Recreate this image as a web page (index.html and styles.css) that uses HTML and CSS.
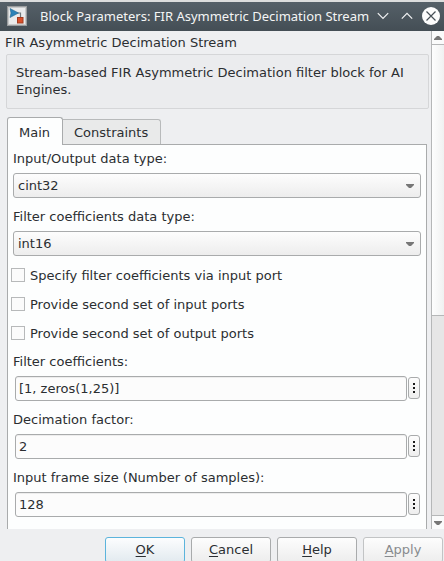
FILE: index.html
```html
<!DOCTYPE html>
<html lang="en">
<head>
<meta charset="utf-8">
<title>Block Parameters: FIR Asymmetric Decimation Stream</title>
<link rel="stylesheet" href="styles.css">
</head>
<body>
<div class="window">
  <header class="titlebar">
    <svg class="app-icon" width="20" height="20" viewBox="0 0 20 20">
      <rect x=".5" y=".5" width="19" height="19" fill="#e9eaeb" stroke="#999c9e"/>
      <rect x="1.5" y="1.5" width="17" height="17" fill="none" stroke="#c8c9ca"/>
      <path d="M10 7H13.5V12" fill="none" stroke="#70787d" stroke-width="1.2"/>
      <path d="M3 2.5L11.5 7L3 11.5L4 7Z" fill="#2d83b8" stroke="#22658f" stroke-width=".6"/>
      <rect x="10.5" y="11.5" width="5.5" height="5.5" fill="#d9502b" stroke="#a13c20"/>
    </svg>
    <h1 class="title">Block Parameters: FIR Asymmetric Decimation Stream</h1>
    <div class="controls">
      <svg width="12" height="8" viewBox="0 0 12 8"><path d="M.8 1.2L6 6.4L11.2 1.2" fill="none" stroke="#f3f4f5" stroke-width="1.2"/></svg>
      <svg width="12" height="8" viewBox="0 0 12 8"><path d="M.8 6.6L6 1.4L11.2 6.6" fill="none" stroke="#f3f4f5" stroke-width="1.2"/></svg>
      <svg class="close" width="18" height="18" viewBox="0 0 18 18"><circle cx="9" cy="9" r="9" fill="#fcfcfc"/><path d="M4.5 4.5L13.5 13.5M13.5 4.5L4.5 13.5" stroke="#475057" stroke-width="1.2"/></svg>
    </div>
  </header>
  <div class="viewport">
    <main class="content">
      <div class="heading">FIR Asymmetric Decimation Stream</div>
      <div class="description">Stream-based FIR Asymmetric Decimation filter block for AI<br>Engines.</div>
      <nav class="tabs"><div class="tab active">Main</div><div class="tab">Constraints</div></nav>
      <section class="panel">
        <div class="label">Input/Output data type:</div>
        <div class="select"><span>cint32</span><svg width="8" height="4" viewBox="0 0 8 4"><path d="M0 0H8V1L5 4H3L0 1Z" fill="#777"/></svg></div>
        <div class="label">Filter coefficients data type:</div>
        <div class="select"><span>int16</span><svg width="8" height="4" viewBox="0 0 8 4"><path d="M0 0H8V1L5 4H3L0 1Z" fill="#777"/></svg></div>
        <div class="checks">
          <div class="check"><i class="box"></i><span>Specify filter coefficients via input port</span></div>
          <div class="check"><i class="box"></i><span>Provide second set of input ports</span></div>
          <div class="check"><i class="box"></i><span>Provide second set of output ports</span></div>
        </div>
        <div class="label">Filter coefficients:</div>
        <div class="field"><div class="input">[1, zeros(1,25)]</div><div class="more"><i></i><i></i><i></i></div></div>
        <div class="label">Decimation factor:</div>
        <div class="field"><div class="input">2</div><div class="more"><i></i><i></i><i></i></div></div>
        <div class="label">Input frame size (Number of samples):</div>
        <div class="field"><div class="input">128</div><div class="more"><i></i><i></i><i></i></div></div>
      </section>
    </main>
    <aside class="scrollbar">
      <div class="arrow up"><svg width="8" height="4" viewBox="0 0 8 4"><path d="M0 4V3L3 0H5L8 3V4Z" fill="#777"/></svg></div>
      <div class="thumb"></div>
      <div class="trough"></div>
      <div class="arrow down"><svg width="8" height="4" viewBox="0 0 8 4"><path d="M0 0H8V1L5 4H3L0 1Z" fill="#777"/></svg></div>
    </aside>
  </div>
  <footer class="actions">
    <div class="button primary"><span><u>O</u>K</span></div>
    <div class="button"><span><u>C</u>ancel</span></div>
    <div class="button"><span><u>H</u>elp</span></div>
    <div class="button disabled"><span><u>A</u>pply</span></div>
  </footer>
</div>
</body>
</html>
```
FILE: styles.css
```css
* { box-sizing: border-box; }
body { margin: 0; overflow: hidden; }
svg { display: block; flex: none; }
.window {
  width: 444px; height: 561px; overflow: hidden;
  display: flex; flex-direction: column;
  background: #eeeff1; color: #2b2e31;
  font: 13px/17px "DejaVu Sans", sans-serif;
  white-space: nowrap;
}
.titlebar {
  flex: none; height: 31px; padding: 0 4px 0 7px;
  border-top: 2px solid #dcdddd;
  display: flex; align-items: center;
  background: linear-gradient(#556068, #444e55);
}
.app-icon { margin-top: -2px; }
.title {
  flex: none; margin: -2px 0 0 13px; width: 337px; color: #f4f5f5;
  font: 13px/18px "Noto Sans", sans-serif;
}
.controls { display: flex; align-items: center; gap: 12px; margin-top: -1px; }
.close { margin-left: -3px; }
.viewport { flex: none; height: 498px; display: flex; overflow: hidden; }
.content { width: 431px; flex: none; }
.heading { padding: 3px 0 0 5px; height: 23px; }
.description {
  margin-left: 6px; width: 423px; height: 55px; padding: 9px;
  border: 1px solid #d5d6d8; border-radius: 2px; background: #ebecee;
}
.tabs { display: flex; align-items: flex-end; margin: 8px 0 0 7px; height: 27px; }
.tab {
  height: 25px; width: 98px; padding: 4px 0 0 11px;
  border: 1px solid #b8babb; border-width: 1px 1px 0 0;
  border-radius: 0 3px 0 0; background: #e9eaea;
}
.tab.active {
  position: relative; z-index: 1; height: 28px; width: 56px; margin-bottom: -1px; padding-top: 6px;
  border-color: #a9abac; border-width: 1px 1px 0 1px; border-radius: 3px 3px 0 0; background: #fdfefe;
}
.panel {
  margin-left: 7px; width: 420px; height: 400px; padding: 5px 5px 0;
  border: 1px solid #a9abac; background: #fdfefe;
}
.label { height: 23px; }
.select {
  height: 25px; width: 408px; margin-bottom: 10px; padding: 0 6px 0 4px;
  display: flex; align-items: center; justify-content: space-between;
  border: 1px solid #a9abac; border-radius: 3px;
  background: linear-gradient(#fdfdfd, #ededed);
}
.checks { padding-top: 2px; margin-left: -2px; height: 87px; }
.check { height: 29px; display: flex; align-items: flex-start; gap: 5px; line-height: 15px; }
.box { width: 14px; height: 14px; border: 1px solid #b7b9ba; background: #fbfbfb; }
.field { height: 25px; margin-bottom: 10px; padding-left: 2px; display: flex; gap: 1px; }
.input {
  width: 392px; height: 25px; padding: 3px 0 0 3px;
  border: 1px solid #a9abac; border-radius: 3px; background: #fcfcfc;
  box-shadow: inset 0 1px #ededed;
}
.more {
  width: 12px; height: 22px; margin-top: 1px;
  display: flex; flex-direction: column; align-items: center; justify-content: center; gap: 2px;
  border: 1px solid #a9abac; border-radius: 3px; background: linear-gradient(#fdfdfd, #eee);
}
.more i { width: 2px; height: 2px; background: #1b1b1b; }
.scrollbar {
  width: 13px; border-left: 1px solid #b5b7b8;
  display: flex; flex-direction: column; background: #e6e6e6;
}
.arrow { flex: none; display: flex; align-items: center; justify-content: center; background: #fafbfb; }
.up { height: 14px; border-bottom: 1px solid #b5b7b8; }
.down { height: 14px; border-top: 1px solid #b5b7b8; }
.thumb { height: 271px; flex: none; border-bottom: 1px solid #b5b7b8; background: linear-gradient(90deg, #fdfefe, #f0f1f1); }
.trough { flex: 1; }
.actions { display: flex; gap: 6px; padding: 8px 0 0 105px; }
.button {
  flex: none; width: 80px; height: 26px; padding-top: 3px; text-align: center;
  border: 1px solid #a9abac; border-radius: 3px; background: linear-gradient(#fdfdfd, #ededed);
}
.primary { border-color: #5cb4dc; background: linear-gradient(#fcfdfe, #e2eaef); }
.disabled { color: #888b8e; border-color: #c2c4c5; }
u { text-decoration: underline; text-underline-offset: 2px; text-decoration-thickness: 1px; }
```
